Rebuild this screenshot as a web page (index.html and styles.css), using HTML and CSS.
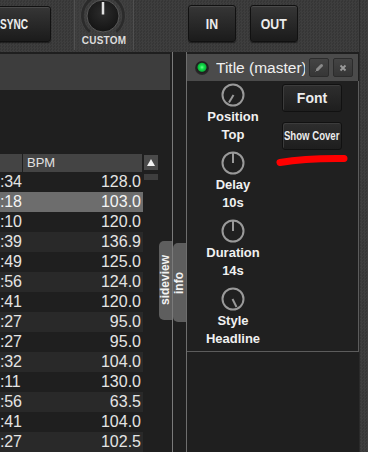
FILE: index.html
```html
<!DOCTYPE html>
<html>
<head>
<meta charset="utf-8">
<link rel="stylesheet" href="styles.css">
</head>
<body>
<div class="app">
  <header class="topbar">
    <div class="sync-slot">
      <div class="btn sync"><span class="sync-txt">SYNC</span></div>
    </div>
    <div class="custom">
      <svg class="big-knob" width="58" height="33" viewBox="0 0 58 33">
        <defs>
          <radialGradient id="kg" cx="50%" cy="40%" r="60%">
            <stop offset="0" stop-color="#2c2c2c"/>
            <stop offset="1" stop-color="#141414"/>
          </radialGradient>
        </defs>
        <path d="M14.5 32.1 A21 21 0 1 1 41.5 32.1" fill="none" stroke="#2b2b2b" stroke-width="3.5"/>
        <path d="M13.5 33 A22.5 22.5 0 1 1 42.5 33" fill="none" stroke="#4a4a4a" stroke-width="0.8"/>
        <circle cx="28" cy="16" r="16" fill="url(#kg)" stroke="#585858" stroke-width="1"/>
        <line x1="28" y1="2" x2="28" y2="14.5" stroke="#e2e2e2" stroke-width="2.5"/>
      </svg>
      <div class="custom-label">CUSTOM</div>
    </div>
    <div class="io">
      <div class="btn io-btn in"><span class="io-txt">IN</span></div>
      <div class="btn io-btn"><span class="io-txt">OUT</span></div>
    </div>
    <div class="top-fill"></div>
    <div class="edge"></div>
  </header>
  <main class="main">
    <section class="library">
      <div class="lib-head"></div>
      <div class="lib-gap"></div>
      <div class="lib-body">
        <div class="table">
          <div class="thead">
            <div class="th first"></div>
            <div class="th bpm">BPM</div>
          </div>
          <div class="row"><div class="t">:34</div><div class="b">128.0</div></div>
          <div class="row sel"><div class="t">:18</div><div class="b">103.0</div></div>
          <div class="row"><div class="t">:10</div><div class="b">120.0</div></div>
          <div class="row alt"><div class="t">:39</div><div class="b">136.9</div></div>
          <div class="row"><div class="t">:49</div><div class="b">125.0</div></div>
          <div class="row alt"><div class="t">:56</div><div class="b">124.0</div></div>
          <div class="row"><div class="t">:41</div><div class="b">120.0</div></div>
          <div class="row alt"><div class="t">:27</div><div class="b">95.0</div></div>
          <div class="row"><div class="t">:27</div><div class="b">95.0</div></div>
          <div class="row alt"><div class="t">:32</div><div class="b">104.0</div></div>
          <div class="row"><div class="t">:11</div><div class="b">130.0</div></div>
          <div class="row alt"><div class="t">:56</div><div class="b">63.5</div></div>
          <div class="row"><div class="t">:41</div><div class="b">104.0</div></div>
          <div class="row alt"><div class="t">:27</div><div class="b">102.5</div></div>
        </div>
        <div class="scroll">
          <div class="sort-btn">
            <svg width="8" height="7" viewBox="0 0 8 7"><polygon points="4,0 8,7 0,7" fill="#f2f2f2"/></svg>
          </div>
          <div class="thumb"></div>
        </div>
        <div class="tabslot">
          <div class="tab"><span class="tab-txt">sideview</span></div>
        </div>
      </div>
    </section>
    <div class="tabcol">
      <div class="tab"><span class="tab-txt">info</span></div>
    </div>
    <section class="panel">
      <div class="panel-head">
        <span class="led"></span>
        <span class="title">Title (master)</span>
        <div class="hbtn">
          <svg width="10" height="10" viewBox="0 0 10 10"><path d="M3.5 6.5 L7.5 2.5" stroke="#8a8a8a" stroke-width="3" stroke-linecap="round"/><path d="M1.5 8.5 L3.5 6.5" stroke="#8a8a8a" stroke-width="1"/></svg>
        </div>
        <div class="hbtn">
          <svg width="8" height="8" viewBox="0 0 8 8"><path d="M1.5 1.5 L6.5 6.5 M6.5 1.5 L1.5 6.5" stroke="#9a9a9a" stroke-width="1.8"/></svg>
        </div>
      </div>
      <div class="panel-body">
        <div class="knobs">
          <div class="kblock">
            <svg class="knob" width="24" height="24" viewBox="0 0 24 24"><circle cx="12" cy="12" r="10.5" fill="none" stroke="#9a9a9a" stroke-width="2"/><line x1="12.5" y1="12" x2="8" y2="19.5" stroke="#9a9a9a" stroke-width="2"/></svg>
            <div class="klabel">Position</div>
            <div class="klabel">Top</div>
          </div>
          <div class="kblock">
            <svg class="knob" width="24" height="24" viewBox="0 0 24 24"><circle cx="12" cy="12" r="10.5" fill="none" stroke="#9a9a9a" stroke-width="2"/><line x1="12" y1="2" x2="12" y2="12" stroke="#9a9a9a" stroke-width="2"/></svg>
            <div class="klabel">Delay</div>
            <div class="klabel">10s</div>
          </div>
          <div class="kblock">
            <svg class="knob" width="24" height="24" viewBox="0 0 24 24"><circle cx="12" cy="12" r="10.5" fill="none" stroke="#9a9a9a" stroke-width="2"/><line x1="12" y1="2" x2="12" y2="12" stroke="#9a9a9a" stroke-width="2"/></svg>
            <div class="klabel">Duration</div>
            <div class="klabel">14s</div>
          </div>
          <div class="kblock">
            <svg class="knob" width="24" height="24" viewBox="0 0 24 24"><circle cx="12" cy="12" r="10.5" fill="none" stroke="#9a9a9a" stroke-width="2"/><line x1="11.5" y1="12" x2="15.5" y2="20" stroke="#9a9a9a" stroke-width="2"/></svg>
            <div class="klabel">Style</div>
            <div class="klabel">Headline</div>
          </div>
        </div>
        <div class="buttons">
          <div class="btn pbtn font">Font</div>
          <div class="btn pbtn cover"><span class="cover-txt">Show Cover</span></div>
          <svg class="mark" width="72" height="12" viewBox="0 0 72 12"><path d="M4 8.5 Q 30 4 68 4.5" fill="none" stroke="#ff0000" stroke-width="7" stroke-linecap="round"/></svg>
        </div>
      </div>
      <div class="panel-rest"></div>
    </section>
    <div class="edge"></div>
  </main>
</div>
</body>
</html>
```
FILE: styles.css
```css
* { box-sizing: border-box; }
html, body { margin: 0; padding: 0; }
body {
  width: 368px;
  height: 452px;
  overflow: hidden;
  background: #1f1f1f;
  font-family: "Liberation Sans", Arial, sans-serif;
  color: #e6e6e6;
}
.app { display: flex; flex-direction: column; width: 368px; height: 452px; }

.topbar, .edge {
  background-color: #3a3a3a;
  background-image: repeating-conic-gradient(#3e3e3e 0 25%, #363636 0 50%);
  background-size: 3px 3px;
}
.topbar { height: 52px; display: flex; flex-shrink: 0; }

.btn {
  background: linear-gradient(#363636, #1b1b1b);
  border: 1px solid #111;
  border-radius: 3px;
  box-shadow: inset 0 1px 0 #4a4a4a, 0 1px 1px rgba(0,0,0,0.5);
  color: #ececec;
  font-weight: bold;
  display: flex;
  align-items: center;
}
.sync-slot { width: 74px; padding-top: 6px; overflow: hidden; }
.sync {
  width: 62px;
  height: 36px;
  margin-left: -11px;
  justify-content: flex-start;
  padding-left: 10px;
}
.sync-txt { display: inline-block; font-size: 14px; transform: scaleX(0.72); transform-origin: left center; }

.custom {
  width: 60px;
  height: 50px;
  border-left: 1px solid #505050;
  border-right: 1px solid #505050;
  background: rgba(70,70,70,0.25);
  display: flex;
  flex-direction: column;
  align-items: center;
}
.big-knob { display: block; }
.custom-label { font-size: 10px; font-weight: bold; color: #dcdcdc; margin-top: 2px; letter-spacing: 0.2px; }

.io { display: flex; gap: 14px; padding-left: 54px; padding-top: 5px; }
.io-btn { width: 48px; height: 37px; justify-content: center; }
.io-txt { display: inline-block; font-size: 14px; transform: scaleX(0.88); }
.top-fill { flex: 1; }
.edge { width: 9px; border-left: 1px solid #2a2a2a; flex-shrink: 0; }

.main { display: flex; height: 400px; }

.library {
  width: 173px;
  border-right: 1px solid #7a7a7a;
  display: flex;
  flex-direction: column;
}
.lib-head { height: 37px; margin-top: 2px; width: 170px; background: #3d3d3d; }
.lib-gap { height: 65px; }
.lib-body { display: flex; flex: 1; }

.table { width: 143px; display: flex; flex-direction: column; }
.thead { display: flex; height: 18px; }
.th { background: #444; height: 18px; }
.th.first { width: 22px; }
.th.bpm { width: 119px; margin-left: 1px; font-size: 13px; line-height: 18px; padding-left: 4px; color: #e2e2e2; }
.row { display: flex; height: 20px; font-size: 16px; line-height: 20px; color: #e4e4e4; }
.row.alt { background: #292929; }
.row.sel { background: #6d6d6d; color: #f4f4f4; }
.t { width: 22px; white-space: nowrap; letter-spacing: -0.2px; }
.b { flex: 1; text-align: right; padding-right: 2px; }

.scroll { width: 14px; margin-left: 1px; display: flex; flex-direction: column; }
.sort-btn { height: 15px; margin-top: 1px; background: #4a4a4a; display: flex; align-items: center; justify-content: center; }
.thumb { height: 6px; margin-top: 4px; background: #3e3e3e; }

.tabslot { width: 14px; padding-left: 1px; padding-top: 87px; }
.tabcol { width: 13px; padding-top: 191px; }
.tab {
  width: 13px;
  height: 79px;
  background: #5e5e5e;
  border-radius: 5px 0 0 5px;
  display: flex;
  align-items: center;
  justify-content: center;
}
.tab-txt {
  writing-mode: vertical-rl;
  transform: rotate(180deg);
  font-size: 12px;
  font-weight: bold;
  color: #f2f2f2;
  line-height: 13px;
}

.panel {
  width: 173px;
  border-left: 1px solid #6e6e6e;
  display: flex;
  flex-direction: column;
  padding-top: 2px;
}
.panel-head {
  height: 27px;
  width: 171px;
  background: #4b4b4b;
  display: flex;
  align-items: center;
  padding-left: 8px;
}
.led {
  width: 14px;
  height: 14px;
  border-radius: 50%;
  background: radial-gradient(circle at 50% 45%, #6bff8e 0, #14e04a 2px, #0bb53a 4px, #1e1e1e 5px, #2a2a2a 7px);
  flex-shrink: 0;
}
.title {
  font-size: 15.5px;
  color: #f0f0f0;
  margin-left: 7px;
  width: 89px;
  overflow: hidden;
  white-space: nowrap;
  flex-shrink: 0;
}
.hbtn {
  width: 20px;
  height: 19px;
  margin-left: 4px;
  background: linear-gradient(#444, #363636);
  border: 1px solid #2c2c2c;
  border-radius: 2px;
  display: flex;
  align-items: center;
  justify-content: center;
  flex-shrink: 0;
}

.panel-body {
  height: 271px;
  width: 172px;
  border-right: 1px solid #5c5c5c;
  border-bottom: 1px solid #5c5c5c;
  background: #202020;
  display: flex;
  padding-top: 2px;
}
.knobs { width: 92px; display: flex; flex-direction: column; align-items: center; gap: 7px; }
.kblock { display: flex; flex-direction: column; align-items: center; }
.knob { display: block; margin-bottom: 1px; }
.klabel { font-size: 13px; font-weight: bold; color: #f0f0f0; line-height: 18px; }

.buttons { margin-left: 3px; width: 70px; display: flex; flex-direction: column; padding-top: 1px; }
.pbtn {
  width: 60px;
  height: 28px;
  justify-content: center;
  background: linear-gradient(#2e2e2e, #1e1e1e);
  border: 1px solid #111;
  box-shadow: inset 1px 1px 0 #3c3c3c;
}
.font { font-size: 14px; }
.cover { margin-top: 10px; font-size: 12px; }
.cover-txt { display: inline-block; white-space: nowrap; transform: scaleX(0.8); }
.mark { display: block; margin-top: 4px; margin-left: -6px; }
.panel-rest { flex: 1; }
```
